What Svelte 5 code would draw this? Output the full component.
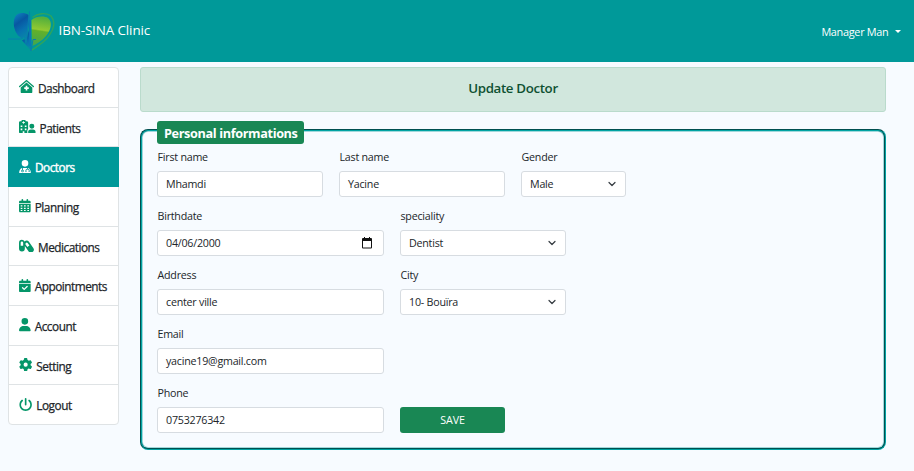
<script>
  const cal = 'M128 0c17.700 0 32 14.300 32 32v32h128V32c0-17.700 14.300-32 32-32s32 14.300 32 32v32h48c26.500 0 48 21.500 48 48v48H0v-48c0-26.500 21.500-48 48-48h48V32c0-17.700 14.300-32 32-32zM0 192h448v272c0 26.500-21.500 48-48 48H48c-26.500 0-48-21.500-48-48z';
  const items = [
    { id: 'dashboard', label: 'Dashboard', vw: 576, w: 15,
      d: 'M288 0a32 32 0 0 1 22 8L568 235a24 24 0 0 1-32 36L288 54 40 271a24 24 0 0 1-32-36L266 8a32 32 0 0 1 22-8zM288 96L512 292V464a48 48 0 0 1-48 48H112a48 48 0 0 1-48-48V292zM256 224v56h-56v64h56v56h64v-56h56v-64h-56v-56z' },
    { id: 'patients', label: 'Patients', vw: 640, w: 16.6,
      d: 'M48 48H96V24a24 24 0 0 1 24-24H232a24 24 0 0 1 24 24V48h48a48 48 0 0 1 48 48V350q-32 32-34 98 0 34 14 64H208V432H144V512H48a48 48 0 0 1-48-48V96a48 48 0 0 1 48-48zM160 48V80H128V112H160V144H192V112H224V80H192V48zM64 208V272H128V208zM224 208V272H288V208zM64 328V392H128V328zM224 328V392H288V328zM496 144a96 96 0 1 1 0 192 96 96 0 1 1 0-192zM456 368H536A104 104 0 0 1 640 472Q640 512 608 512H384Q352 512 352 472A104 104 0 0 1 456 368z' },
    { id: 'doctors', label: 'Doctors', vw: 448, w: 12,
      d: 'M224 256A128 128 0 1 0 224 0a128 128 0 1 0 0 256zM112 304V378A46 46 0 1 0 144 378V304H306V337C270 345 242 378 242 416V448a16 16 0 0 0 16 16H282V432H274V416a48 48 0 0 1 96 0V432H362V464H386a16 16 0 0 0 16-16V416C402 378 374 345 338 337V304C404 320 448 402 448 482A30 30 0 0 1 418 512H30A30 30 0 0 1 0 482C0 402 45 320 112 304zM128 400a22 22 0 1 1 0 44 22 22 0 1 1 0-44z' },
    { id: 'planning', label: 'Planning', vw: 448, w: 11.7,
      d: cal + 'M64 240v48h64v-48zM192 240v48h64v-48zM320 240v48h64v-48zM64 336v48h64v-48zM192 336v48h64v-48zM320 336v48h64v-48zM64 424v36h64v-36zM192 424v36h64v-36zM320 424v36h64v-36z' },
    { id: 'medications', label: 'Medications', vw: 576, w: 15,
      d: 'M112 32A112 112 0 0 1 213 95C267 43 335 46 375 98L550 347A112 112 0 0 1 370 480L224 273V368A112 112 0 0 1 0 368V144A112 112 0 0 1 112 32zM64 144V256H160V144A48 48 0 0 0 64 144zM251 212L320 309 401 251 332 154A51 51 0 0 0 251 212z' },
    { id: 'appointments', label: 'Appointments', vw: 448, w: 11.7,
      d: cal + 'M329 305a24 24 0 0 0-34-34L200 366l-47-47a24 24 0 0 0-34 34l64 64a24 24 0 0 0 34 0z' },
    { id: 'profile', label: 'Account', vw: 448, w: 11.7,
      d: 'M224 256A128 128 0 1 0 224 0a128 128 0 1 0 0 256zm-45.700 48C79.800 304 0 383.800 0 482.300C0 498.700 13.300 512 29.700 512H418.300c16.400 0 29.700-13.300 29.700-29.700C448 383.800 368.200 304 269.700 304H178.300z' },
    { id: 'setting', label: 'Setting', vw: 512, w: 13.3,
      d: 'M495.900 166.600c3.200 8.700 .5 18.400-6.400 24.600l-43.300 39.400c1.100 8.300 1.700 16.800 1.700 25.400s-.6 17.100-1.700 25.400l43.300 39.400c6.900 6.200 9.600 15.900 6.400 24.600c-4.400 11.900-9.700 23.300-15.800 34.300l-4.700 8.100c-6.600 11-14 21.400-22.100 31.200c-5.900 7.200-15.700 9.600-24.500 6.800l-55.700-17.700c-13.400 10.300-28.200 18.900-44 25.400l-12.500 57.100c-2 9.100-9 16.300-18.200 17.800c-13.800 2.300-28 3.500-42.500 3.500s-28.700-1.200-42.500-3.500c-9.200-1.500-16.200-8.700-18.200-17.800l-12.500-57.100c-15.800-6.500-30.600-15.100-44-25.400L83.100 425.900c-8.800 2.800-18.600 .3-24.500-6.800c-8.100-9.800-15.500-20.200-22.100-31.200l-4.700-8.100c-6.100-11-11.400-22.400-15.800-34.300c-3.200-8.700-.5-18.400 6.400-24.600l43.300-39.400C64.600 273.100 64 264.600 64 256s.6-17.100 1.700-25.400L22.400 191.200c-6.900-6.200-9.600-15.900-6.400-24.600c4.400-11.900 9.700-23.300 15.800-34.300l4.700-8.100c6.600-11 14-21.400 22.100-31.200c5.900-7.200 15.700-9.600 24.500-6.800l55.700 17.700c13.400-10.300 28.200-18.900 44-25.400l12.500-57.100c2-9.100 9-16.300 18.200-17.800C227.300 1.200 241.500 0 256 0s28.700 1.200 42.500 3.500c9.200 1.500 16.200 8.700 18.200 17.800l12.500 57.100c15.800 6.500 30.600 15.100 44 25.400l55.700-17.700c8.800-2.800 18.600-.3 24.500 6.800c8.100 9.800 15.500 20.200 22.100 31.200l4.700 8.100c6.100 11 11.400 22.400 15.800 34.300zM256 336a80 80 0 1 0 0-160 80 80 0 1 0 0 160z' },
    { id: 'logout', label: 'Logout', vw: 512, w: 13.3,
      d: 'M288 32c0-17.700-14.300-32-32-32s-32 14.300-32 32V256c0 17.700 14.300 32 32 32s32-14.300 32-32V32zM143.500 120.600c13.600-11.300 15.400-31.500 4.100-45.100s-31.500-15.400-45.100-4.100C49.700 115.400 16 181.800 16 256c0 132.500 107.500 240 240 240s240-107.500 240-240c0-74.200-33.800-140.600-86.600-184.600c-13.600-11.300-33.800-9.400-45.100 4.100s-9.400 33.800 4.100 45.100c38.900 32.300 63.500 81 63.500 135.400c0 97.200-78.800 176-176 176s-176-78.800-176-176c0-54.400 24.700-103.100 63.500-135.400z' }
  ];
  const rows = [
    [
      { label: 'First name', value: 'Mhamdi', size: 'medium' },
      { label: 'Last name', value: 'Yacine', size: 'medium' },
      { label: 'Gender', value: 'Male', size: 'small', kind: 'select' }
    ],
    [
      { label: 'Birthdate', value: '04/06/2000', size: 'large', kind: 'date' },
      { label: 'speciality', value: 'Dentist', size: 'medium', kind: 'select' }
    ],
    [
      { label: 'Address', value: 'center ville', size: 'large' },
      { label: 'City', value: '10- Bouïra', size: 'medium', kind: 'select' }
    ],
    [{ label: 'Email', value: 'yacine19@gmail.com', size: 'large' }],
    [{ label: 'Phone', value: '0753276342', size: 'large' }]
  ];
</script>

<header>
  <div class="brand">
    <svg width="47" height="42" viewBox="0 0 47 42">
      <defs>
        <linearGradient id="blue" x1="0" y1="0" x2="0.4" y2="1">
          <stop offset="0" stop-color="#1187c4" />
          <stop offset="0.4" stop-color="#0757a2" />
          <stop offset="0.7" stop-color="#0870b0" />
          <stop offset="1" stop-color="#0885a8" />
        </linearGradient>
        <linearGradient id="green" x1="0" y1="0" x2="-0.1" y2="1">
          <stop offset="0" stop-color="#55b03c" />
          <stop offset="0.4" stop-color="#92c931" />
          <stop offset="0.45" stop-color="#62b02a" />
          <stop offset="1" stop-color="#3fa453" />
        </linearGradient>
      </defs>
      <path d="M20.500 5C16 2 9 2.500 7 7C4.500 13 6 20 10 25.500L14.500 29 16.500 25.500 18 31 21 14z" fill="url(#blue)" />
      <path d="M14 30.500L16.500 29 18 34 20.500 20 22.500 40z" fill="url(#blue)" />
      <path d="M23.500 10C28 6 36 5.500 40 8C45 12 43 20 38 26C34 31 28 34.500 24 36z" fill="url(#green)" />
      <path d="M24.500 7.500C29 3.500 38 2 43 6C48 12 45.500 20 40 27C35 33.500 28 37 23 40.500" fill="none" stroke="#2da45d" stroke-width="1.4" />
      <path d="M0 29H13.500L16 25.500 18 32 21.500 1.500 23 41 25 29.500H28" fill="none" stroke="#087fae" stroke-width="1" />
      <path d="M22 10V36" stroke="#0b76b4" stroke-width="2" />
    </svg>
    <span>IBN-SINA Clinic</span>
  </div>
  <div class="account"><span>Manager Man</span><i></i></div>
</header>

<div class="body">
  <nav>
    {#each items as item}
      <a class={item.id} class:active={item.id === 'doctors'}>
        <svg width={item.w} height="13.300" viewBox="0 0 {item.vw} 512"><path d={item.d} fill="currentColor" fill-rule="evenodd" /></svg>
        <span>{item.label}</span>
      </a>
    {/each}
  </nav>
  <main>
    <h1><span>Update Doctor</span></h1>
    <fieldset>
      <legend><span>Personal informations</span></legend>
      {#each rows as row, r}
        <div class="row">
          {#each row as f}
            <div class="field {f.size}">
              <span class="label">{f.label}</span>
              <div class="control">
                <span>{f.value}</span>
                {#if f.kind === 'select'}
                  <svg width="8" height="8" viewBox="0 0 16 16"><path d="M2 5l6 6 6-6" fill="none" stroke="#343a40" stroke-width="2.400" stroke-linecap="round" stroke-linejoin="round" /></svg>
                {:else if f.kind === 'date'}
                  <svg class="date" width="10" height="12" viewBox="0 0 10 12"><path d="M0 2a1 1 0 0 1 1-1h1V0h1v1h4V0h1v1h1a1 1 0 0 1 1 1v8.500a1 1 0 0 1-1 1H1a1 1 0 0 1-1-1zM1 4v6.500h8V4z" fill="#111" fill-rule="evenodd" /></svg>
                {/if}
              </div>
            </div>
          {/each}
          {#if r === 4}<button>SAVE</button>{/if}
        </div>
      {/each}
    </fieldset>
  </main>
</div>

<style>
  :global(body) { background: #f7fbff; }
  :global(#app) { font-family: "Open Sans", "Noto Sans", sans-serif; color: #212529; height: 471px; overflow: hidden; }
  header { height: 62px; background: #009999; color: #fff; display: flex; justify-content: space-between; align-items: center; padding: 0 13.500px 0 8px; box-sizing: border-box; }
  .brand { display: flex; align-items: center; gap: 3.500px; font-size: 13.400px; letter-spacing: -0.100px; }
  .brand span { line-height: 18px; padding-bottom: 2px; }
  .account { display: flex; align-items: center; font-size: 10.900px; letter-spacing: -0.300px; gap: 6px; padding-top: 1px; }
  .account i { border: 3.300px solid transparent; border-top-color: #fff; border-bottom: 0; }
  .body { display: flex; gap: 21px; padding: 5px 28px 0 8px; }
  nav { width: 111px; height: 358px; box-sizing: border-box; border: 1px solid #dfe3e5; border-radius: 4px; background: #fff; display: flex; flex-direction: column; }
  nav a { flex: 1; min-height: 0; box-sizing: border-box; display: flex; align-items: center; gap: 4px; padding: 1px 0 0 10px; border-bottom: 1px solid #dfe3e5; font-size: 11.800px; letter-spacing: -0.480px; -webkit-text-stroke: 0.250px currentColor; }
  nav a:last-child { border-bottom: 0; }
  nav svg { color: #059669; flex: none; position: relative; top: -1px; }
  nav .active { background: #009999; color: #fff; margin: 0 -1px; padding-left: 11px; border-color: #009999; -webkit-text-stroke-width: 0.400px; }
  nav .active svg { color: #fff; }
  main { flex: 1; min-width: 0; }
  h1 { margin: 0; height: 45px; box-sizing: border-box; border: 1px solid #badbcc; border-radius: 3px; background: #d1e7dd; color: #0f5132; text-align: center; font-size: 13.300px; font-weight: 600; line-height: 40px; letter-spacing: -0.350px; }
  fieldset { margin: 9px 0 0; padding: 0 15px; min-width: 0; height: 329px; box-sizing: border-box; border: 2px groove #00a3a3; border-radius: 8px; box-shadow: inset 0 0 0 1px rgba(0, 153, 153, 0.35); }
  legend { height: 18px; padding: 0; }
  legend span { display: block; height: 23px; line-height: 24px; padding: 0 6px 0 7px; border-radius: 3px; background: #198754; color: #fff; font-size: 12.700px; font-weight: 700; letter-spacing: -0.370px; }
  .row { display: flex; gap: 16px; height: 59px; align-items: flex-start; }
  legend + .row { margin-top: 5px; }
  .field { display: flex; flex-direction: column; }
  .medium { width: 166px; }
  .small { width: 105px; }
  .large { width: 227px; }
  .label { height: 27px; line-height: 27px; font-size: 10.700px; letter-spacing: -0.230px; padding-left: 0.500px; }
  .control { height: 26px; box-sizing: border-box; border: 1px solid #d7dce1; border-radius: 3px; background: #fff; display: flex; align-items: center; justify-content: space-between; padding: 0 9px 0 8px; font-size: 10.700px; letter-spacing: -0.230px; }
  .date { margin-right: 2px; }
  button { width: 105px; height: 26px; margin: 27px 0 0; padding: 0; border: 0; border-radius: 3px; background: #198754; color: #fff; font: 10.700px "Open Sans", "Noto Sans", sans-serif; letter-spacing: -0.100px; }
</style>
